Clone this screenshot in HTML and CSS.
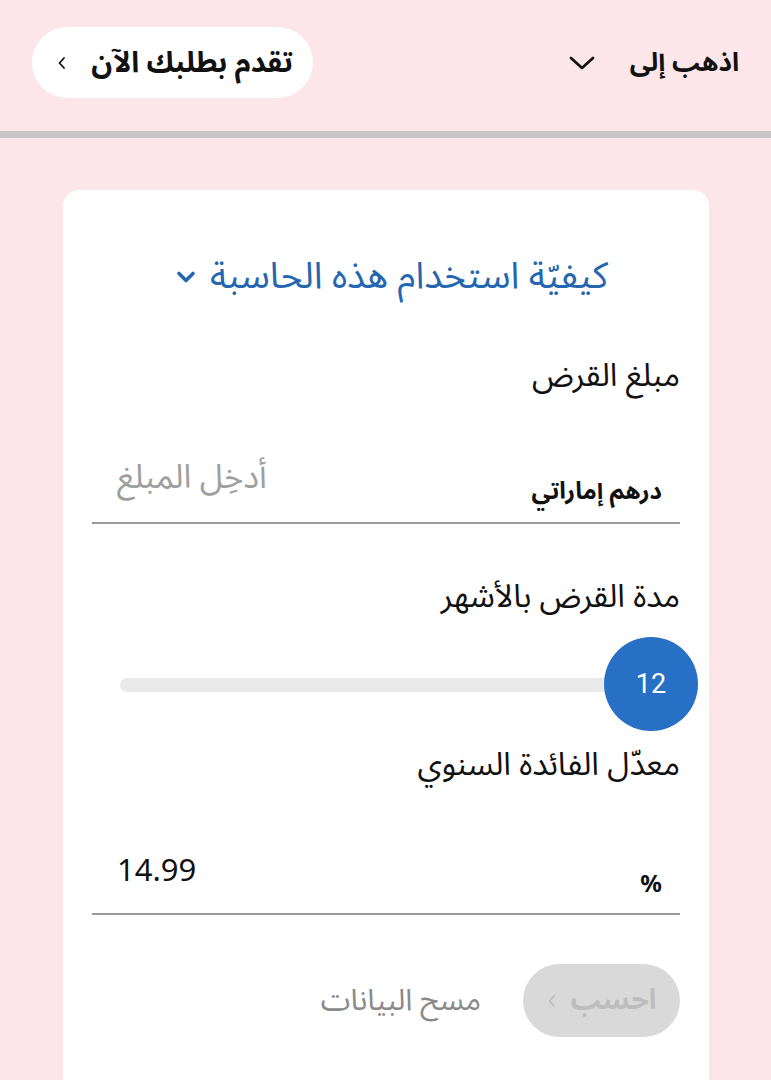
FILE: index.html
```html
<!DOCTYPE html>
<html lang="ar" dir="rtl">
<head>
<meta charset="utf-8">
<link rel="stylesheet" href="styles.css">
</head>
<body>
<header class="topbar">
  <div class="goto">
    <span class="goto-label">اذهب إلى</span>
    <svg class="goto-chev" width="28" height="18" viewBox="0 0 28 18"><path d="M3 4 L14 14 L25 4" fill="none" stroke="#111" stroke-width="2.8" stroke-linecap="round" stroke-linejoin="round"/></svg>
  </div>
  <a class="apply-btn">
    <span>تقدم بطلبك الآن</span>
    <svg width="10" height="14" viewBox="0 0 10 14"><path d="M7 2 L2.5 7 L7 12" fill="none" stroke="#111" stroke-width="1.8" stroke-linecap="round" stroke-linejoin="round"/></svg>
  </a>
</header>

<main class="page">
  <section class="card">
    <div class="howto">
      <span>كيفيّة استخدام هذه الحاسبة</span>
      <svg width="20" height="14" viewBox="0 0 20 14"><path d="M3 3.5 L10 10.5 L17 3.5" fill="none" stroke="#2466b0" stroke-width="3.6" stroke-linecap="round" stroke-linejoin="round"/></svg>
    </div>

    <div class="field-label first">مبلغ القرض</div>
    <div class="input-row amount">
      <span class="unit">درهم إماراتي</span>
      <span class="placeholder">أدخِل المبلغ</span>
    </div>

    <div class="field-label second">مدة القرض بالأشهر</div>
    <div class="slider">
      <div class="track"></div>
      <div class="thumb">12</div>
    </div>

    <div class="field-label">معدّل الفائدة السنوي</div>
    <div class="input-row rate">
      <span class="unit pct">%</span>
      <span class="value">14.99</span>
    </div>

    <div class="actions">
      <button class="calc-btn"><span>احسب</span><svg width="10" height="14" viewBox="0 0 10 14"><path d="M7 2 L2.5 7 L7 12" fill="none" stroke="#bdbdbd" stroke-width="1.8" stroke-linecap="round" stroke-linejoin="round"/></svg></button>
      <button class="clear-btn">مسح البيانات</button>
    </div>
  </section>
</main>
</body>
</html>
```

FILE: styles.css
```css
* { box-sizing: border-box; }
html, body { margin: 0; padding: 0; }
body {
  background: #fde6e9;
  font-family: "Noto Sans Arabic", "DejaVu Sans", "Noto Sans", sans-serif;
  color: #111;
  width: 771px;
  height: 1080px;
  overflow: hidden;
}
.topbar {
  height: 138px;
  border-bottom: 7px solid #c7c5c6;
  display: flex;
  align-items: flex-start;
  justify-content: space-between;
  padding: 27px 32px 0 32px;
}
.goto {
  display: flex;
  align-items: center;
  gap: 34px;
  height: 71px;
}
.goto-label {
  font-size: 26px;
  font-weight: bold;
}
.apply-btn {
  display: flex;
  align-items: center;
  justify-content: space-between;
  height: 71px;
  width: 281px;
  padding: 0 20px 0 25px;
  background: #fff;
  border-radius: 36px;
  font-size: 29px;
  font-weight: bold;
  color: #111;
}
.page {
  padding: 52px 62px 0 63px;
}
.card {
  background: #fff;
  border-radius: 16px;
  padding: 56px 29px 60px 29px;
  min-height: 900px;
}
.howto {
  display: flex;
  align-items: center;
  justify-content: center;
  gap: 14px;
  color: #2466b0;
  font-size: 37px;
  height: 60px;
  padding-left: 12px;
}
.howto svg { margin-top: 2px; }
.field-label {
  font-size: 32px;
  height: 44px;
  line-height: 44px;
}
.field-label.first { margin-top: 48px; }
.field-label.second { margin-top: 51px; }
.input-row {
  display: flex;
  justify-content: space-between;
  border-bottom: 2px solid #9a9a9a;
  padding: 0 18px 0 25px;
}
.input-row.amount {
  height: 126px;
  align-items: flex-end;
  padding-bottom: 12px;
}
.input-row .unit {
  font-size: 24px;
  font-weight: bold;
  line-height: 36px;
}
.placeholder {
  font-size: 33px;
  color: #9e9e9e;
  line-height: 40px;
  margin-bottom: 12px;
}
.slider {
  position: relative;
  height: 124px;
  display: flex;
  align-items: flex-start;
}
.track {
  height: 14px;
  margin-top: 59px;
  background: #e9e9e9;
  border-radius: 7px;
  margin-right: 70px;
  margin-left: 28px;
  flex: 1;
}
.thumb {
  position: absolute;
  right: -18px;
  top: 18px;
  width: 94px;
  height: 94px;
  border-radius: 50%;
  background: #2870c6;
  color: #fff;
  font-family: "Roboto", "Liberation Sans", sans-serif;
  font-size: 27px;
  display: flex;
  align-items: center;
  justify-content: center;
}
.input-row.rate {
  height: 128px;
  align-items: flex-end;
  padding-bottom: 12px;
}
.pct {
  font-family: "Noto Sans", "DejaVu Sans", sans-serif;
  font-size: 26px;
}
.value {
  font-family: "Noto Sans", "DejaVu Sans", sans-serif;
  font-size: 31px;
  line-height: 40px;
  margin-bottom: 12px;
}
.actions {
  display: flex;
  align-items: center;
  gap: 42px;
  margin-top: 49px;
}
.calc-btn {
  display: flex;
  align-items: center;
  justify-content: center;
  gap: 14px;
  width: 157px;
  height: 73px;
  border: none;
  border-radius: 37px;
  background: #d9d9d9;
  color: #bdbdbd;
  font-family: inherit;
  font-size: 28px;
  font-weight: bold;
}
.clear-btn {
  border: none;
  background: none;
  color: #8a8a8a;
  font-family: inherit;
  font-size: 30px;
  padding: 0;
}
```
